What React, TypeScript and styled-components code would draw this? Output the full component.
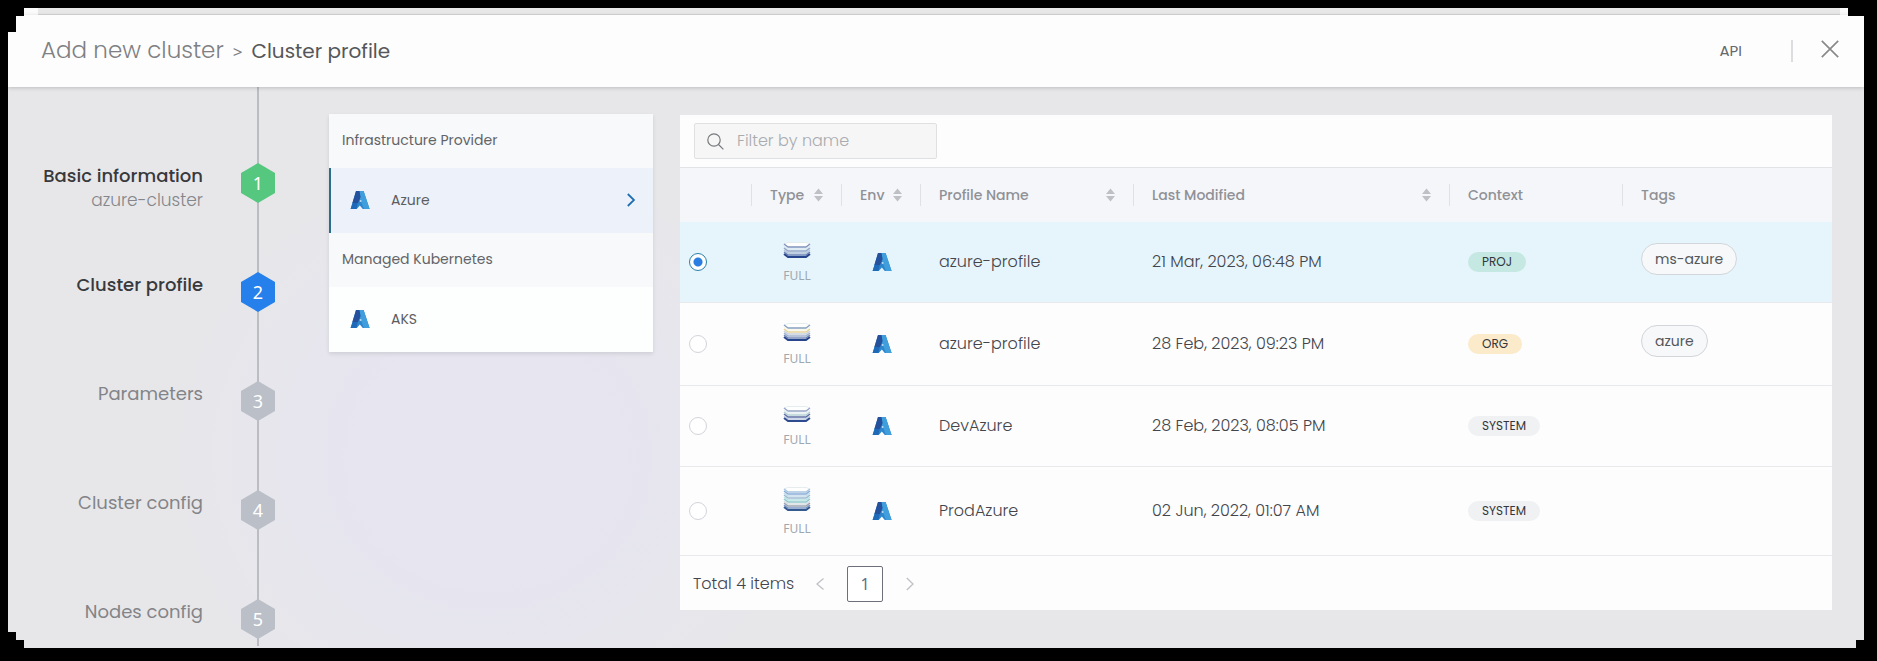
import React, { useState } from "react";
import styled, { createGlobalStyle } from "styled-components";

const GlobalStyle = createGlobalStyle`
  *, *::before, *::after { box-sizing: border-box; }
  body {
    margin: 0;
    background: #000;
    color: #44454b;
    font-family: Poppins, Inter, "Open Sans", sans-serif;
    font-size: 16px;
    line-height: 24px;
  }
  button, input { font: inherit; color: inherit; }
`;

const Frame = styled.div`
  padding: 8px 13px 13px 8px;
`;

const Shell = styled.div`
  display: flex;
  flex-direction: column;
  min-height: calc(100vh - 21px);
  background: #e7e8ea;
  clip-path: polygon(
    16px 0, calc(100% - 16px) 0, calc(100% - 16px) 8px, 100% 8px,
    100% calc(100% - 8px), calc(100% - 8px) calc(100% - 8px), calc(100% - 8px) 100%,
    16px 100%, 16px calc(100% - 8px), 8px calc(100% - 8px), 8px calc(100% - 16px),
    0 calc(100% - 16px), 0 24px, 8px 24px, 8px 8px, 16px 8px
  );
`;

const TopEdge = styled.div`
  height: 7px;
  padding: 0 24px 0 30px;
  background: #fbfbfb;

  &::after {
    content: "";
    display: block;
    height: 7px;
    background: #e8e8e8;
    border-bottom: 1px solid #d6d6d6;
  }
`;

const Header = styled.header`
  display: flex;
  align-items: center;
  justify-content: space-between;
  height: 72px;
  padding: 0 25px 0 33px;
  background: #fdfdfd;
  box-shadow: 0 1px 4px rgba(0, 0, 0, 0.18);
  z-index: 1;
`;

const Breadcrumb = styled.nav`
  display: flex;
  align-items: baseline;
  gap: 9px;
`;

const CrumbLink = styled.a`
  color: #7e8083;
  font-size: 23px;
  font-weight: 300;
  text-decoration: none;
`;

const CrumbSeparator = styled.span`
  color: #7e8082;
  font-family: "Noto Sans", sans-serif;
  font-size: 17px;
`;

const CrumbCurrent = styled.h1`
  margin: 0;
  color: #56575a;
  font-size: 20px;
  font-weight: 400;
`;

const HeaderActions = styled.div`
  display: flex;
  align-items: center;
`;

const TextButton = styled.button`
  padding: 0 49px;
  border: 0;
  background: none;
  color: #68696c;
  font-size: 15px;
  cursor: pointer;
`;

const CloseButton = styled.button`
  display: flex;
  padding: 0 0 4px 28px;
  border: 0;
  border-left: 2px solid #dddddf;
  background: none;
  color: #8a8a8c;
  cursor: pointer;
`;

const Body = styled.div`
  display: flex;
  flex: 1;
  align-items: flex-start;
  padding-right: 32px;
  background: radial-gradient(ellipse 320px 300px at 480px 370px, #e6e5f0 40%, #e7e7ea 100%);
`;

const Steps = styled.ol`
  flex: 0 0 321px;
  align-self: stretch;
  margin: 0 0 2px;
  padding: 76px 0 6px;
  list-style: none;
  background: linear-gradient(#bcbdc3, #bcbdc3) 249px 0 / 2px 100% no-repeat;
`;

const Step = styled.li`
  display: flex;
  gap: 38px;
  min-height: 109px;

  &:last-child { min-height: 39px; }
`;

const StepLabel = styled.div<{ $active: boolean }>`
  width: 195px;
  text-align: right;
  font-size: 18px;
  line-height: 25px;
  font-weight: ${(p) => (p.$active ? 500 : 400)};
  color: ${(p) => (p.$active ? "#38393c" : "#838488")};
`;

const StepNote = styled.div`
  color: #84868a;
  font-size: 17px;
  font-weight: 300;
`;

const StepBadge = styled.span<{ $color: string }>`
  display: flex;
  align-items: center;
  justify-content: center;
  width: 34px;
  height: 40px;
  clip-path: polygon(50% 0, 100% 25%, 100% 75%, 50% 100%, 0 75%, 0 25%);
  background: ${(p) => p.$color};
  color: #fff;
  font-family: "Noto Sans", sans-serif;
  font-size: 18px;
`;

const ProviderCard = styled.aside`
  flex: 0 0 324px;
  margin-top: 27px;
  background: #fdfefe;
  box-shadow: 0 2px 4px rgba(0, 0, 0, 0.1);
`;

const GroupTitle = styled.h2`
  margin: 0;
  padding: 14px 13px 16px;
  background: #f8f9fa;
  color: #626468;
  font-size: 14px;
  font-weight: 400;
`;

const ProviderButton = styled.button<{ $selected: boolean }>`
  display: flex;
  align-items: center;
  width: 100%;
  padding: 20px 18px 21px ${(p) => (p.$selected ? 19 : 21)}px;
  border: 0;
  border-left: ${(p) => (p.$selected ? "2px solid #2a6d8d" : "0")};
  background: ${(p) => (p.$selected ? "#edf2fa" : "transparent")};
  color: #5c5e62;
  font-size: 14px;
  cursor: pointer;
`;

const ProviderName = styled.span`
  flex: 1;
  margin-left: 21px;
  text-align: left;
`;

const ProviderArrow = styled.span`
  display: flex;
  color: #1f6fb5;
`;

const Profiles = styled.main`
  flex: 1;
  min-width: 0;
  margin: 28px 0 38px 27px;
  background: #fdfdfe;
  font-weight: 300;
`;

const Toolbar = styled.div`
  padding: 8px 14px;
  border-bottom: 1px solid #e2e3e6;
`;

const SearchBox = styled.label`
  display: flex;
  align-items: center;
  gap: 13px;
  width: 243px;
  height: 36px;
  padding: 0 12px;
  border: 1px solid #dfe0e2;
  border-radius: 2px;
  background: #f6f6f7;
  color: #77797c;
`;

const SearchInput = styled.input`
  flex: 1;
  min-width: 0;
  padding: 0;
  border: 0;
  outline: 0;
  background: none;
  font-size: 16px;

  &::placeholder { color: #a9acaf; opacity: 1; }
`;

const Table = styled.table`
  width: 100%;
  table-layout: fixed;
  border-collapse: separate;
  border-spacing: 0;
`;

const Col = styled.col<{ $w: number }>`
  width: ${(p) => p.$w}px;
`;

const HeadCell = styled.th`
  height: 54px;
  padding: 0;
  background: #f5f6fa;
  color: #8f9196;
  font-size: 14px;
  font-weight: 500;
  text-align: left;
`;

const HeadInner = styled.div<{ $last?: boolean }>`
  display: flex;
  align-items: center;
  justify-content: space-between;
  height: 22px;
  padding: 0 18px;
  border-right: ${(p) => (p.$last ? 0 : 1)}px solid #e0e1e5;
`;

const SortButton = styled.button`
  display: flex;
  padding: 0;
  border: 0;
  background: none;
  color: #bfc0c6;
  cursor: pointer;
`;

const Row = styled.tr<{ $selected: boolean }>`
  background: ${(p) => (p.$selected ? "#e6f5fc" : "transparent")};
`;

const Cell = styled.td<{ $center?: boolean }>`
  padding: 20px ${(p) => (p.$center ? 0 : 18)}px 16px;
  border-bottom: 1px solid #e8e9ec;
  text-align: ${(p) => (p.$center ? "center" : "left")};
  vertical-align: middle;
  line-height: 20px;
`;

const FlatCell = styled(Cell)`
  padding-top: 0;
  padding-bottom: 0;
`;

const LogoCell = styled(FlatCell)`
  padding-left: 30px;
`;

const RadioCell = styled(FlatCell)`
  padding-left: 9px;
`;

const Radio = styled.input`
  display: block;
  width: 18px;
  height: 18px;
  margin: 0;
  appearance: none;
  border: 1px solid #d3d4da;
  border-radius: 50%;
  background: #fff;

  &:checked {
    border-color: #2c7fa8;
    background: radial-gradient(circle, #2a7de1 4px, #fff 5px);
  }
`;

const TypeBlock = styled.div`
  display: flex;
  flex-direction: column;
  align-items: center;
  gap: 7px;
  color: #a0a8af;
  font-family: "Noto Sans", sans-serif;
  font-size: 12px;
  font-weight: 400;
`;

const ContextBadge = styled.span<{ $bg: string }>`
  display: inline-block;
  padding: 0 14px;
  border-radius: 10px;
  background: ${(p) => p.$bg};
  color: #33363d;
  font-size: 12px;
  font-weight: 400;
  line-height: 20px;
  vertical-align: middle;
`;

const Tag = styled.span`
  display: inline-block;
  margin-bottom: 6px;
  padding: 0 13px;
  border: 1px solid #d2d6da;
  border-radius: 16px;
  background: #f6f8f9;
  color: #54565a;
  font-size: 14px;
  font-weight: 400;
  line-height: 30px;
  vertical-align: middle;
`;

const Pagination = styled.nav`
  display: flex;
  align-items: center;
  padding: 10px 13px 8px;
`;

const Total = styled.span`
  margin-right: 22px;
`;

const ArrowButton = styled.button`
  display: flex;
  padding: 0;
  border: 0;
  background: none;
  color: #c0c1c6;
  cursor: pointer;
`;

const PageButton = styled.button`
  width: 36px;
  height: 36px;
  margin: 0 23px;
  padding: 0;
  border: 1px solid #6d7078;
  border-radius: 2px;
  background: #fff;
  color: #5d6f8f;
  font-family: "Noto Sans", sans-serif;
  font-weight: 400;
  cursor: pointer;
`;

const Logo = styled.svg`
  display: block;
  width: 20px;
  height: 20px;
`;

const AzureLogo = () => (
  <Logo viewBox="0 0 20 20" role="img" aria-label="Azure">
    <path d="M6 1 H13.6 L19.6 19 H12.8 L9.8 15.4 L6.8 19 H0.6 Z" fill="#2d86cc" />
    <path d="M9.4 1 H13.6 L19.6 19 H14 L10 9 Z" fill="#3f9edb" />
    <path d="M2.6 13 L8 12 L6.4 19 H0.6 Z" fill="#1e6ab8" />
    <path d="M6 1 H9.4 L10.6 7 L8 13 H2.4 Z" fill="#25509b" />
    <circle cx="10.6" cy="11" r="1" fill="#b9dcf5" />
  </Logo>
);

const StackIcon = ({ layers }: { layers: string[] }) => {
  const pitch = 2;
  const height = (layers.length - 1) * pitch + 7;
  return (
    <svg width="28" height={height} viewBox={`0 0 28 ${height}`} fill="none" aria-hidden="true">
      <path d="M1 2 L5 0.5 H23 L27 2 L23 5 H5 Z" fill="#fff" stroke="#dfe8ea" strokeWidth="0.8" />
      {layers.map((color, i) => (
        <path
          key={i}
          d={`M1 ${i * pitch + 2} L5 ${i * pitch + 5} H23 L27 ${i * pitch + 2}`}
          stroke={color}
          strokeWidth={i === layers.length - 1 ? 2 : 1.5}
        />
      ))}
    </svg>
  );
};

const SortIcon = () => (
  <svg width="9" height="14" viewBox="0 0 9 14" fill="currentColor" aria-hidden="true">
    <path d="M4.5 0.5 L9 6 H0 Z M4.5 13.5 L9 8 H0 Z" />
  </svg>
);

const Chevron = ({ left, stroke = 1.3 }: { left?: boolean; stroke?: number }) => (
  <svg width="8" height="14" viewBox="0 0 8 14" fill="none" stroke="currentColor" strokeWidth={stroke} aria-hidden="true">
    <path d={left ? "M7.5 1.5 L1 7 L7.5 12.5" : "M0.8 1 L7 7 L0.8 13"} />
  </svg>
);

const SearchIcon = () => (
  <svg width="17" height="17" viewBox="0 0 17 17" fill="none" stroke="currentColor" strokeWidth="1.2" aria-hidden="true">
    <circle cx="7" cy="7" r="6.2" />
    <path d="M11.5 11.5 L16.4 16.4" />
  </svg>
);

const CloseIcon = () => (
  <svg width="18" height="18" viewBox="0 0 18 18" stroke="currentColor" strokeWidth="1.7" aria-hidden="true">
    <path d="M0.8 0.8 L17.2 17.2 M17.2 0.8 L0.8 17.2" />
  </svg>
);

const steps = [
  { label: "Basic information", note: "azure-cluster", color: "#55c77f", active: true },
  { label: "Cluster profile", color: "#2680eb", active: true },
  { label: "Parameters", color: "#bbbfc7", active: false },
  { label: "Cluster config", color: "#bbbfc7", active: false },
  { label: "Nodes config", color: "#bbbfc7", active: false },
];

const columns = [
  { title: "", width: 72 },
  { title: "Type", width: 90, sortable: true },
  { title: "Env", width: 79, sortable: true },
  { title: "Profile Name", width: 213, sortable: true },
  { title: "Last Modified", width: 316, sortable: true },
  { title: "Context", width: 173 },
  { title: "Tags", width: 209 },
];

const contextColors: Record<string, string> = {
  PROJ: "#c5e9e2",
  ORG: "#fbebcb",
  SYSTEM: "#f0f1f2",
};

const profiles = [
  {
    name: "azure-profile",
    modified: "21 Mar, 2023, 06:48 PM",
    context: "PROJ",
    tag: "ms-azure",
    layers: ["#8295bd", "#dfe7ef", "#93a5c8", "#b4c3d8", "#6a80b3", "#27458c"],
  },
  {
    name: "azure-profile",
    modified: "28 Feb, 2023, 09:23 PM",
    context: "ORG",
    tag: "azure",
    layers: ["#8aa3c2", "#f8f6ea", "#e6d499", "#c6d2e0", "#9fb0cc", "#7186b6", "#27458c"],
  },
  {
    name: "DevAzure",
    modified: "28 Feb, 2023, 08:05 PM",
    context: "SYSTEM",
    layers: ["#98a8c8", "#e8eef2", "#b3d0d4", "#5b6da3", "#c0cce4", "#2f4b8f"],
  },
  {
    name: "ProdAzure",
    modified: "02 Jun, 2022, 01:07 AM",
    context: "SYSTEM",
    layers: [
      "#a9c6e2", "#86abd6", "#c3dcec", "#9db9d0", "#b5e2e2",
      "#8fc6cc", "#d8dee2", "#9aa2ae", "#7794c4", "#34598f",
    ],
  },
];

export default function App() {
  const [selected, setSelected] = useState(0);

  return (
    <>
      <GlobalStyle />
      <Frame>
        <Shell>
          <TopEdge />
          <Header>
            <Breadcrumb aria-label="Breadcrumb">
              <CrumbLink href="#">Add new cluster</CrumbLink>
              <CrumbSeparator>&gt;</CrumbSeparator>
              <CrumbCurrent>Cluster profile</CrumbCurrent>
            </Breadcrumb>
            <HeaderActions>
              <TextButton type="button">API</TextButton>
              <CloseButton type="button" aria-label="Close">
                <CloseIcon />
              </CloseButton>
            </HeaderActions>
          </Header>

          <Body>
            <Steps>
              {steps.map((step, i) => (
                <Step key={step.label}>
                  <StepLabel $active={step.active}>
                    {step.label}
                    {step.note && <StepNote>{step.note}</StepNote>}
                  </StepLabel>
                  <StepBadge $color={step.color}>{i + 1}</StepBadge>
                </Step>
              ))}
            </Steps>

            <ProviderCard>
              <GroupTitle>Infrastructure Provider</GroupTitle>
              <ProviderButton type="button" $selected>
                <AzureLogo />
                <ProviderName>Azure</ProviderName>
                <ProviderArrow>
                  <Chevron stroke={1.8} />
                </ProviderArrow>
              </ProviderButton>
              <GroupTitle>Managed Kubernetes</GroupTitle>
              <ProviderButton type="button" $selected={false}>
                <AzureLogo />
                <ProviderName>AKS</ProviderName>
              </ProviderButton>
            </ProviderCard>

            <Profiles>
              <Toolbar>
                <SearchBox>
                  <SearchIcon />
                  <SearchInput type="text" placeholder="Filter by name" aria-label="Filter by name" />
                </SearchBox>
              </Toolbar>
              <Table>
                <colgroup>
                  {columns.map((c, i) => (
                    <Col key={i} $w={c.width} />
                  ))}
                </colgroup>
                <thead>
                  <tr>
                    {columns.map((c, i) => (
                      <HeadCell key={i} scope="col">
                        <HeadInner $last={i === columns.length - 1}>
                          {c.title}
                          {c.sortable && (
                            <SortButton type="button" aria-label={`Sort by ${c.title}`}>
                              <SortIcon />
                            </SortButton>
                          )}
                        </HeadInner>
                      </HeadCell>
                    ))}
                  </tr>
                </thead>
                <tbody>
                  {profiles.map((p, i) => (
                    <Row key={i} $selected={i === selected}>
                      <RadioCell>
                        <Radio
                          type="radio"
                          name="profile"
                          aria-label={`Select ${p.name}`}
                          checked={i === selected}
                          onChange={() => setSelected(i)}
                        />
                      </RadioCell>
                      <Cell $center>
                        <TypeBlock>
                          <StackIcon layers={p.layers} />
                          FULL
                        </TypeBlock>
                      </Cell>
                      <LogoCell>
                        <AzureLogo />
                      </LogoCell>
                      <FlatCell>{p.name}</FlatCell>
                      <FlatCell>{p.modified}</FlatCell>
                      <FlatCell>
                        <ContextBadge $bg={contextColors[p.context]}>{p.context}</ContextBadge>
                      </FlatCell>
                      <FlatCell>{p.tag && <Tag>{p.tag}</Tag>}</FlatCell>
                    </Row>
                  ))}
                </tbody>
              </Table>
              <Pagination aria-label="Pagination">
                <Total>Total 4 items</Total>
                <ArrowButton type="button" aria-label="Previous page">
                  <Chevron left />
                </ArrowButton>
                <PageButton type="button" aria-current="page">1</PageButton>
                <ArrowButton type="button" aria-label="Next page">
                  <Chevron />
                </ArrowButton>
              </Pagination>
            </Profiles>
          </Body>
        </Shell>
      </Frame>
    </>
  );
}
